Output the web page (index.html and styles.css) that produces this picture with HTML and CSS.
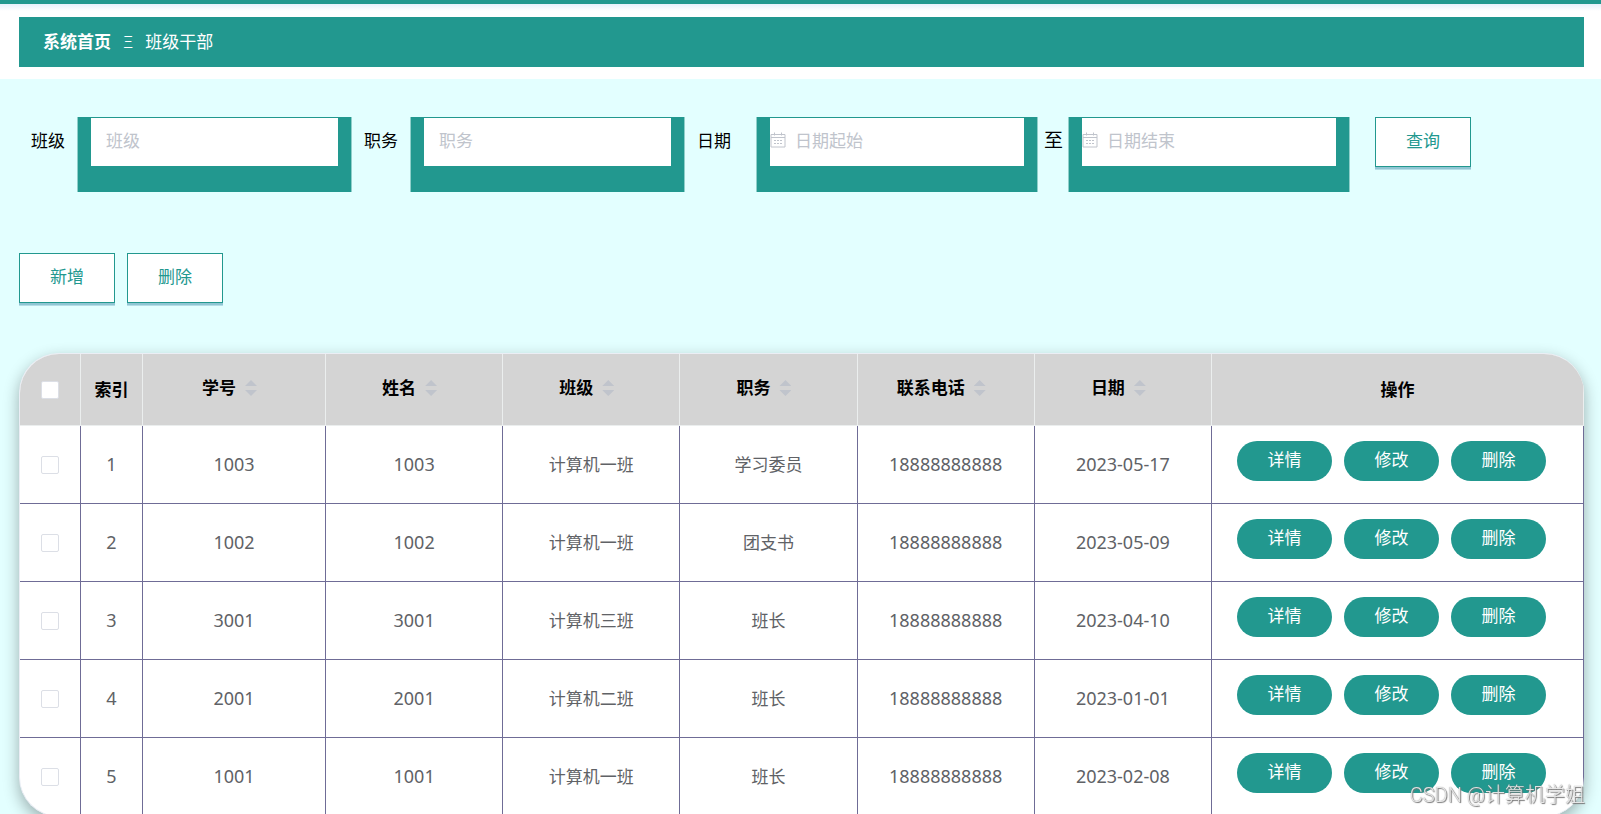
FILE: index.html
```html
<!DOCTYPE html>
<html lang="zh-CN">
<head>
<meta charset="utf-8">
<title>班级干部</title>
<link rel="stylesheet" href="styles.css">
</head>
<body>
<header class="top">
  <nav class="crumbs" aria-label="面包屑">
    <a class="crumb-home" href="#">系统首页</a>
    <span class="crumb-sep">Ξ</span>
    <span>班级干部</span>
  </nav>
</header>
<main class="content">
  <form class="filters">
    <label class="label" for="f-class">班级</label>
    <div class="field"><input class="input" id="f-class" type="text" placeholder="班级"></div>
    <label class="label" for="f-duty">职务</label>
    <div class="field"><input class="input" id="f-duty" type="text" placeholder="职务"></div>
    <label class="label label-date" for="f-start">日期</label>
    <div class="field field-date">
      <svg class="cal" viewBox="0 0 16 16" aria-hidden="true"><path d="M1 2.500h14v12.500H1zM1 5.500h14M4.500 0.500v3M11.500 0.500v3M4 8.500h2M7 8.500h2M10 8.500h2M4 11.500h2M7 11.500h2M10 11.500h2"/></svg>
      <input class="input" id="f-start" type="text" placeholder="日期起始">
    </div>
    <label class="to" for="f-end">至</label>
    <div class="field field-date">
      <svg class="cal" viewBox="0 0 16 16" aria-hidden="true"><path d="M1 2.500h14v12.500H1zM1 5.500h14M4.500 0.500v3M11.500 0.500v3M4 8.500h2M7 8.500h2M10 8.500h2M4 11.500h2M7 11.500h2M10 11.500h2"/></svg>
      <input class="input" id="f-end" type="text" placeholder="日期结束">
    </div>
    <button class="btn btn-query" type="button">查询</button>
  </form>
  <div class="actions">
    <button class="btn" type="button">新增</button>
    <button class="btn" type="button">删除</button>
  </div>
  <div class="table-wrap">
    <table class="table">
      <colgroup><col class="c-check"><col class="c-index"><col class="c-no"><col><col><col><col><col><col class="c-ops"></colgroup>
      <thead>
        <tr>
          <th><input class="check" type="checkbox" aria-label="全选"></th>
          <th>索引</th>
          <th><span class="sort">学号<i class="carets"></i></span></th>
          <th><span class="sort">姓名<i class="carets"></i></span></th>
          <th><span class="sort">班级<i class="carets"></i></span></th>
          <th><span class="sort">职务<i class="carets"></i></span></th>
          <th><span class="sort">联系电话<i class="carets"></i></span></th>
          <th><span class="sort">日期<i class="carets"></i></span></th>
          <th>操作</th>
        </tr>
      </thead>
      <tbody>
        <tr>
          <td><input class="check" type="checkbox" aria-label="选择第1行"></td>
          <td class="num">1</td><td class="num">1003</td><td class="num">1003</td><td>计算机一班</td><td>学习委员</td><td class="num">18888888888</td><td class="num">2023-05-17</td>
          <td><div class="ops"><button class="pill" type="button">详情</button><button class="pill" type="button">修改</button><button class="pill" type="button">删除</button></div></td>
        </tr>
        <tr>
          <td><input class="check" type="checkbox" aria-label="选择第2行"></td>
          <td class="num">2</td><td class="num">1002</td><td class="num">1002</td><td>计算机一班</td><td>团支书</td><td class="num">18888888888</td><td class="num">2023-05-09</td>
          <td><div class="ops"><button class="pill" type="button">详情</button><button class="pill" type="button">修改</button><button class="pill" type="button">删除</button></div></td>
        </tr>
        <tr>
          <td><input class="check" type="checkbox" aria-label="选择第3行"></td>
          <td class="num">3</td><td class="num">3001</td><td class="num">3001</td><td>计算机三班</td><td>班长</td><td class="num">18888888888</td><td class="num">2023-04-10</td>
          <td><div class="ops"><button class="pill" type="button">详情</button><button class="pill" type="button">修改</button><button class="pill" type="button">删除</button></div></td>
        </tr>
        <tr>
          <td><input class="check" type="checkbox" aria-label="选择第4行"></td>
          <td class="num">4</td><td class="num">2001</td><td class="num">2001</td><td>计算机二班</td><td>班长</td><td class="num">18888888888</td><td class="num">2023-01-01</td>
          <td><div class="ops"><button class="pill" type="button">详情</button><button class="pill" type="button">修改</button><button class="pill" type="button">删除</button></div></td>
        </tr>
        <tr>
          <td><input class="check" type="checkbox" aria-label="选择第5行"></td>
          <td class="num">5</td><td class="num">1001</td><td class="num">1001</td><td>计算机一班</td><td>班长</td><td class="num">18888888888</td><td class="num">2023-02-08</td>
          <td><div class="ops"><button class="pill" type="button">详情</button><button class="pill" type="button">修改</button><button class="pill" type="button">删除</button></div></td>
        </tr>
      </tbody>
    </table>
  </div>
</main>
<div class="watermark">CSDN @计算机学姐</div>
</body>
</html>
```
FILE: styles.css
```css
:root {
  --teal: #22988f;
  --line: #6f6c96;
  --light: #ebeef5;
}
* { box-sizing: border-box; }
body {
  margin: 0;
  height: 100vh;
  overflow: hidden;
  background: #e3ffff;
  color: #000;
  font-family: "Noto Sans", "Noto Sans CJK SC", sans-serif;
  font-size: 17px;
  line-height: 24px;
}
input, button { font: inherit; }

.top {
  border-top: 4px solid var(--teal);
  padding: 13px 17px 12px 19px;
  background: linear-gradient(#e6f0fb, #fff 7px);
}
.crumbs {
  display: flex;
  align-items: center;
  gap: 12px;
  height: 50px;
  padding: 0 24px;
  background: var(--teal);
  color: #fff;
}
.crumb-home { color: #fff; font-weight: 700; text-decoration: none; }
.crumb-sep { font-weight: 300; }

.content { padding: 38px 17px 0 19px; }
.filters {
  display: flex;
  flex-wrap: wrap;
  align-items: flex-start;
  padding-left: 12px;
}
.label { margin-right: 12px; line-height: 48px; }
.label-date { margin-right: 25px; }
.field {
  display: flex;
  width: 275px;
  height: 75px;
  margin-right: 12px;
  padding: 1px 14px 26px;
  background: var(--teal);
  box-shadow: inset 1px 0 #8fcfca, inset -1px 0 #8fcfca;
}
.field-date { position: relative; width: 282px; margin-right: 0; }
.input {
  flex: 1;
  min-width: 0;
  padding: 0 15px 2px;
  border: 0;
  border-radius: 0;
  background: #fff;
  color: #606266;
  outline: none;
}
.input::placeholder { color: #c0c4cc; opacity: 1; }
.field-date .input { padding-left: 25px; }
.cal {
  position: absolute;
  left: 14px;
  top: 15px;
  width: 16px;
  height: 16px;
  fill: none;
  stroke: #c0c4cc;
}
.to { margin: 0 5px 0 6px; font-size: 19px; line-height: 46px; }
.btn {
  width: 96px;
  height: 50px;
  padding: 0 0 2px;
  border: 1px solid var(--teal);
  background: #fff;
  color: var(--teal);
  box-shadow: 0 2px #90c6d3, 0 3px #b4dde7;
}
.btn-query { margin-left: 25px; }
.actions { display: flex; gap: 12px; padding: 61px 0 50px; }

.table-wrap {
  overflow: hidden;
  border: 1px solid var(--light);
  border-right: 0;
  border-radius: 40px;
  background: #fff;
  box-shadow: 0 6px 16px rgba(0, 0, 0, .32);
}
.table {
  width: 100%;
  table-layout: fixed;
  border-collapse: separate;
  border-spacing: 0;
  text-align: center;
}
.c-check { width: 61px; }
.c-index { width: 62px; }
.c-no { width: 183px; }
.c-ops { width: 372px; }
th, td { padding: 0; vertical-align: middle; }
th {
  height: 72px;
  border-right: 1px solid #ebeeee;
  border-bottom: 1px solid #ebeeee;
  background: #d4d4d4;
  font-weight: 700;
}
td {
  height: 78px;
  border-right: 1px solid var(--line);
  border-bottom: 1px solid var(--line);
  color: #606266;
}
.num { padding-bottom: 2px; font-size: 18px; }
.sort { display: inline-flex; align-items: center; padding-bottom: 3px; }
.carets {
  display: grid;
  gap: 4px;
  width: 30px;
  padding-left: 9px;
}
.carets::before, .carets::after {
  content: "";
  width: 12px;
  height: 6px;
  background: #c0c4cc;
  clip-path: polygon(50% 0, 100% 100%, 0 100%);
}
.carets::after { clip-path: polygon(0 0, 100% 0, 50% 100%); }
.check {
  appearance: none;
  display: block;
  width: 18px;
  height: 18px;
  margin: 0 auto;
  border: 1px solid #dcdfe6;
  border-radius: 2px;
  background: #fff;
}
.ops { display: flex; justify-content: center; padding-bottom: 7px; }
.pill {
  width: 95px;
  height: 40px;
  margin-right: 12px;
  padding: 0 0 2px;
  border: 0;
  border-radius: 20px;
  background: var(--teal);
  color: #fff;
}
.watermark {
  position: fixed;
  right: 16px;
  bottom: 7px;
  color: rgba(255, 255, 255, .8);
  font-family: Roboto, "Noto Sans CJK SC", sans-serif;
  font-size: 20px;
  font-weight: 300;
  text-shadow: 0 0 1px #777, 1px 1px 1px #777;
}
```
